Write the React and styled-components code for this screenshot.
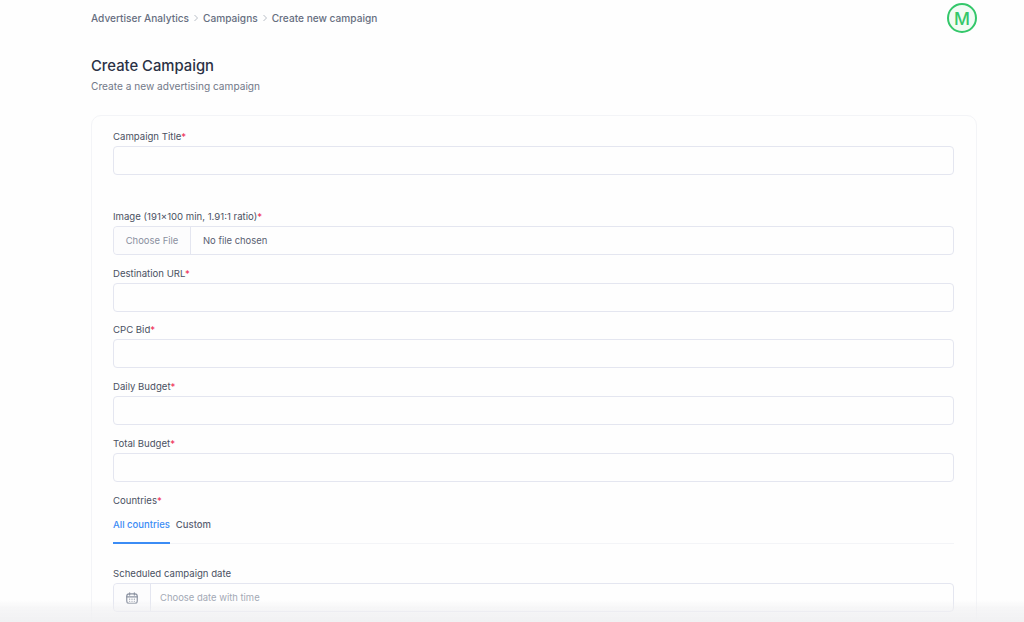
import React from "react";
import styled, { createGlobalStyle } from "styled-components";

const GlobalStyle = createGlobalStyle`
	html, body {
		margin: 0;
		height: 100%;
		background: #fefefe;
		overflow: hidden;
	}
	* {
		box-sizing: border-box;
	}
	body {
		font-family: "Inter", "Liberation Sans", sans-serif;
		color: #374151;
	}
`;

const Page = styled.div`
	height: 622px;
	padding: 0 47px 0 91px;
	overflow: hidden;
`;

const TopBar = styled.header`
	display: flex;
	align-items: center;
	justify-content: space-between;
	height: 36px;
`;

const Crumbs = styled.nav`
	display: flex;
	align-items: center;
	gap: 3px;
	font-size: 10.15px;
	font-weight: 500;
	color: #666e80;
`;

const Avatar = styled.div`
	width: 30px;
	height: 30px;
	border: 2px solid #34c76a;
	border-radius: 50%;
	background: #f1fbf4;
	color: #34c76a;
	font-size: 17.5px;
	font-weight: 450;
	display: flex;
	align-items: center;
	justify-content: center;
`;

const Heading = styled.h1`
	margin: 19px 0 0;
	font-size: 14.8px;
	line-height: 22px;
	font-weight: 500;
	color: #2a3145;
`;

const Subheading = styled.p`
	margin: 1px 0 0;
	font-size: 10.15px;
	line-height: 16px;
	color: #727989;
`;

const Card = styled.section`
	margin-top: 21px;
	padding: 11px 22px 0 21px;
	border: 1px solid #f3f4f7;
	border-radius: 10px;
	background: #fefefe;
	height: 520px;
`;

const Field = styled.div`
	padding-top: ${props => props.$top || 0}px;
	margin-bottom: ${props => props.$gap || 8.7}px;
`;

const Label = styled.label`
	display: block;
	height: 19px;
	font-size: 9.6px;
	line-height: 19px;
	font-weight: 400;
	color: #4a5162;

	b {
		font-weight: 400;
		color: #ee2b54;
	}
`;

const Input = styled.div`
	height: 29px;
	border: 1px solid #e4e6f0;
	border-radius: 4px;
	background: #fefefe;
	display: flex;
	align-items: center;
	font-size: 9.45px;
`;

const Addon = styled.div`
	height: 100%;
	width: ${props => props.$width}px;
	flex: none;
	display: flex;
	align-items: center;
	justify-content: center;
	border-right: 1px solid #e4e6f0;
	background: #fcfcfd;
	color: #8a90a0;
	border-radius: 4px 0 0 4px;
`;

const InputText = styled.span`
	padding-left: ${props => props.$pad || 12}px;
	color: ${props => props.$muted ? "#a3a9b5" : "#5a6172"};
`;

const Tabs = styled.div`
	display: flex;
	gap: 6px;
	height: 28px;
	margin-top: 6px;
	border-bottom: 1px solid #f3f4f7;
`;

const Tab = styled.div`
	height: 28px;
	padding-top: 1px;
	line-height: 16px;
	font-size: 9.5px;
	font-weight: 500;
	color: ${props => props.$active ? "#3b8cf5" : "#5a6172"};
	border-bottom: 2px solid ${props => props.$active ? "#3b8cf5" : "transparent"};
`;

const BottomFade = styled.div`
	position: fixed;
	left: 0;
	right: 0;
	bottom: 0;
	height: 22px;
	background: linear-gradient(to bottom, rgba(240, 240, 242, 0), rgba(240, 240, 242, 0.65) 45%, rgba(240, 240, 242, 0.95));
	pointer-events: none;
`;

const Calendar = () => (
	<svg width="14" height="14" viewBox="0 0 24 24" fill="none" stroke="#8b92a1" strokeWidth="2" strokeLinecap="round">
		<rect x="3" y="5" width="18" height="16" rx="4" />
		<path d="M8 3v4M16 3v4M3 10h18" />
		<path d="M8 14h.01M12 14h.01M16 14h.01M8 17.5h.01M12 17.5h.01M16 17.5h.01" />
	</svg>
);

const Chevron = () => (
	<svg width="8" height="8" viewBox="0 0 8 8" fill="none" stroke="#b0b5c0" strokeWidth="0.9">
		<path d="M2.5 1l3 3-3 3" />
	</svg>
);

const textFields = ["Destination URL", "CPC Bid", "Daily Budget", "Total Budget"];

export default function App() {
	return (
		<React.Fragment>
			<GlobalStyle />
			<Page>
				<TopBar>
					<Crumbs>
						<span>Advertiser Analytics</span>
						<Chevron />
						<span>Campaigns</span>
						<Chevron />
						<span>Create new campaign</span>
					</Crumbs>
					<Avatar>M</Avatar>
				</TopBar>
				<Heading>Create Campaign</Heading>
				<Subheading>Create a new advertising campaign</Subheading>
				<Card>
					<Field $gap={32}>
						<Label>Campaign Title<b>*</b></Label>
						<Input />
					</Field>
					<Field>
						<Label>Image (191×100 min, 1.91:1 ratio)<b>*</b></Label>
						<Input>
							<Addon $width={77}>Choose File</Addon>
							<InputText>No file chosen</InputText>
						</Input>
					</Field>
					{textFields.map(name => (
						<Field key={name}>
							<Label>{name}<b>*</b></Label>
							<Input />
						</Field>
					))}
					<Field $top={1} $gap={20}>
						<Label>Countries<b>*</b></Label>
						<Tabs>
							<Tab $active>All countries</Tab>
							<Tab>Custom</Tab>
						</Tabs>
					</Field>
					<Field>
						<Label>Scheduled campaign date</Label>
						<Input>
							<Addon $width={37}><Calendar /></Addon>
							<InputText $pad={9} $muted>Choose date with time</InputText>
						</Input>
					</Field>
				</Card>
			</Page>
			<BottomFade />
		</React.Fragment>
	);
}
